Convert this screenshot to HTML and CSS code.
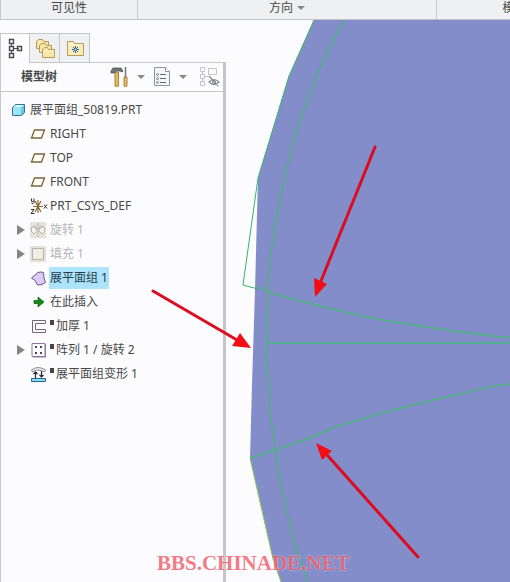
FILE: index.html
```html
<!DOCTYPE html>
<html lang="zh-CN">
<head>
<meta charset="utf-8">
<title>模型树</title>
<link rel="stylesheet" href="styles.css">
</head>
<body>
<header class="ribbon">
  <div class="group group-view">可见性</div>
  <div class="group group-orient"><button class="group-menu" type="button">方向<span class="caret"></span></button></div>
  <div class="group group-model">模型显示</div>
</header>
<main class="workspace">
  <aside class="side">
    <nav class="tabs">
      <button class="tab active" type="button" aria-label="模型树">
        <svg width="18" height="22" viewBox="0 0 18 22" fill="none" stroke="#4a4a4a"><path d="M5.500 5v3M5.500 13v3M8 10.500h5"/><path stroke-width="1.400" d="M3.500 1.500h4v4h-4zM3.500 8.500h4v4h-4zM3.500 15.500h4v4h-4zM11.500 8.500h4v4h-4z"/></svg>
      </button>
      <button class="tab" type="button" aria-label="文件夹浏览器">
        <svg width="22" height="22" viewBox="0 0 22 22" fill="#f8e6a6" stroke="#b59a5c"><path d="M2.500 11.500V4.500l2-2h4l1 2h5v7z"/><path d="M5.500 15.500V8.500l2-2h4l1 2h5v7z"/><path d="M8.500 20.500v-8l2-2h3l1 2h6v8z"/><path stroke="#fff7d6" d="M9.500 14h10"/></svg>
      </button>
      <button class="tab" type="button" aria-label="收藏夹">
        <svg width="20" height="20" viewBox="0 0 20 20"><path d="M2.500 17.500v-14h6l1 2h9v12z" fill="#f9ebba" stroke="#b89c5e"/><path d="M3.500 6.500h14" stroke="#fff9dd"/><path d="M10.500 8v7M7 11.500h7M8 9l5 5M13 9l-5 5" stroke="#235d7e" stroke-width="1"/><circle cx="10.500" cy="11.500" r="1" fill="#e9f4f5"/></svg>
      </button>
    </nav>
    <section class="panel">
      <div class="panel-head">
        <h1 class="title">模型树</h1>
        <div class="tools">
          <button class="tool" type="button" aria-label="设置">
            <svg width="20" height="24" viewBox="0 0 20 24"><path d="M1 6l2-3h8l2 3-1 1-2-1H5v2H1z" fill="#73777b" stroke="#4c5054" stroke-width=".8"/><path d="M5 7h3.500v14q-2 1-3.500 0z" fill="#e8bd5f" stroke="#8c6b27" stroke-width=".8"/><path d="M15.500 2v10" stroke="#74777b" stroke-width="1.500"/><path d="M14 12h3v9q-1.500 1-3 0z" fill="#e8bd5f" stroke="#8c6b27" stroke-width=".8"/></svg>
          </button>
          <span class="caret"></span>
          <button class="tool" type="button" aria-label="显示">
            <svg width="20" height="24" viewBox="0 0 20 24"><path d="M2.500 2.500h11l4 4v14h-15z" fill="#f3f5f6" stroke="#8d969d"/><path d="M13.500 2.500v4h4" fill="#fff" stroke="#8d969d"/><path d="M8 9.500h6M8 13.500h6M8 17.500h6" stroke="#626970"/><g fill="none" stroke="#626970" stroke-width=".8"><circle cx="5.500" cy="9.500" r="1"/><circle cx="5.500" cy="13.500" r="1"/><circle cx="5.500" cy="17.500" r="1"/></g></svg>
          </button>
          <span class="caret"></span>
          <button class="tool" type="button" aria-label="隐藏项">
            <svg width="22" height="24" viewBox="0 0 22 24" fill="none"><path d="M2.500 2.500h4v4h-4zM2.500 9.500h4v4h-4zM2.500 16.500h4v4h-4zM4.500 6.500v3M4.500 13.500v3M6.500 11.500h4M10.500 3.500h8v6h-8z" stroke="#c3c5c8"/><path d="M11 17q5-5 10 0-5 5-10 0zM11 11l9 10" stroke="#888c90" stroke-width="1.200"/><circle cx="16" cy="17" r="1.500" stroke="#888c90"/></svg>
          </button>
        </div>
      </div>
      <ul class="tree">
        <li class="row root">
          <svg class="icon" viewBox="0 0 16 16"><path d="M2.500 5.500l3-3h9v8l-3 3h-9z" fill="#65c9e7" stroke="#35718a"/><path d="M3 6h8v7H3z" fill="#9be5f7"/><path d="M3 5.500l3-2.500h8l-3 2.500z" fill="#d8f8ff"/></svg>
          <span class="label">展平面组_50819.PRT</span>
        </li>
        <li class="row"><svg class="icon" viewBox="0 0 16 16"><path d="M4.500 4h10l-3 8h-10z" fill="#fffef6" stroke="#75633b" stroke-width="1.300"/></svg><span class="label">RIGHT</span></li>
        <li class="row"><svg class="icon" viewBox="0 0 16 16"><path d="M4.500 4h10l-3 8h-10z" fill="#fffef6" stroke="#75633b" stroke-width="1.300"/></svg><span class="label">TOP</span></li>
        <li class="row"><svg class="icon" viewBox="0 0 16 16"><path d="M4.500 4h10l-3 8h-10z" fill="#fffef6" stroke="#75633b" stroke-width="1.300"/></svg><span class="label">FRONT</span></li>
        <li class="row">
          <svg class="icon wide" viewBox="0 0 18 16" fill="none"><path d="M8 2v13M3 8.500h10M5 3l6 11M11 3L5 14" stroke="#8a6a35" stroke-width="1.200"/><path d="M1.500 .500v3h2M4 .500v4l-1 1H1.500M1 11.500h3l-3 4h3.500M14 6.500l3 4M17 6.500l-3 4" stroke="#333"/></svg>
          <span class="label">PRT_CSYS_DEF</span>
        </li>
        <li class="row muted">
          <button class="toggle" type="button" aria-label="展开 旋转 1"></button>
          <svg class="icon" viewBox="0 0 16 16" fill="none"><path fill="#e4e4dc" d="M0 0h16v16H0z"/><path d="M8 1v14" stroke="#aaa" stroke-dasharray="3 1"/><path d="M2 5l4-1 1 5-3 3-3-3zM14 5l-4-1-1 5 3 3 3-3zM3 4l3 3M13 4l-3 3" stroke="#b5b5a8" fill="#f4f4ee"/></svg>
          <span class="label">旋转 1</span>
        </li>
        <li class="row muted">
          <button class="toggle" type="button" aria-label="展开 填充 1"></button>
          <svg class="icon" viewBox="0 0 16 16"><path fill="#e2e2d9" d="M0 0h16v16H0z"/><path d="M2.500 2.500h11v11h-11z" fill="#eeeee6" stroke="#b5b5a6"/></svg>
          <span class="label">填充 1</span>
        </li>
        <li class="row">
          <svg class="icon" viewBox="0 0 16 16"><path d="M1.500 8L8 2.500q3-1 5.500 0 0 6 2 10-3 2.500-8 2.500Q6 10 1.500 8z" fill="#d9caf6" stroke="#67588a"/></svg>
          <span class="label selected">展平面组 1</span>
        </li>
        <li class="row">
          <svg class="icon" viewBox="0 0 16 16"><path d="M4 6.500h4V3l6 5-6 5V9.500H4z" fill="#118a18" stroke="#09560d" stroke-width=".7"/></svg>
          <span class="label">在此插入</span>
        </li>
        <li class="row">
          <svg class="icon" viewBox="0 0 16 16" fill="none"><path d="M15.500 2.500h-13v12h13v-3h-10v-6h10z" fill="#faf8ff" stroke="#6e6878"/></svg>
          <span class="mark"></span><span class="label">加厚 1</span>
        </li>
        <li class="row">
          <button class="toggle" type="button" aria-label="展开 阵列 1"></button>
          <svg class="icon" viewBox="0 0 16 16"><path d="M2 1.500h13v13H2z" fill="#fff" stroke="#89789e"/><path d="M15.500 2v13H3" fill="none" stroke="#8d799e"/><path d="M5 4h2v2H5zM10 4h2v2h-2zM5 10h2v2H5zM10 10h2v2h-2z" fill="#4f425b"/></svg>
          <span class="mark"></span><span class="label">阵列 1 / 旋转 2</span>
        </li>
        <li class="row">
          <svg class="icon" viewBox="0 0 16 16"><path d="M1.500 4Q8-1 15.500 4l-1 2Q8 2 2.500 6z" fill="#eee" stroke="#8a8a8a"/><path d="M5.500 12V6M3.500 8l2-2 2 2M11.500 5v6M9.500 9l2 2 2-2" fill="none" stroke="#222" stroke-width="1.200"/><path d="M1.500 12.500h14v3h-14z" fill="#8bd9fa" stroke="#266789"/></svg>
          <span class="mark"></span><span class="label">展平面组变形 1</span>
        </li>
      </ul>
    </section>
  </aside>
  <svg class="view" role="img" aria-label="展平曲面">
    <g transform="translate(-226 -20)" fill="none">
      <path d="M314 20L289 76 258 178 257 215 255 290 252 385 250 458 273 559 281 582H3000V20z" fill="#828dca"/>
      <g stroke="#4bb57d" stroke-width="1.400">
        <path d="M344 20Q323 58 312 88 294 132 281 194 270 250 268 284L267 360Q268 402 275 448 282 498 297 551L308 582"/>
        <path d="M258 286L268 292Q345 314 400 323T510 338"/>
        <path d="M250 458L275 450Q310 439 335 427 410 404 465 393 488 386 510 384"/>
      </g>
      <path d="M267 343H3000" stroke="#55ad92" stroke-width="2"/>
      <path d="M314 20L289 76 258 178 243 285 258 289" stroke="#35b565"/>
      <path d="M250 458L273 559 281 582" stroke="#8bc65a"/>
      <g stroke="#dc0d20" stroke-width="3" stroke-linecap="round"><path d="M375 147L321 281M153 291L237 340M418 557L328 456"/></g>
      <path d="M315 297L314 278 327 284zM251 348L240 333 232 346zM316 443L332 451 322 460z" fill="#f30d16"/>
    </g>
  </svg>
  <p class="watermark">BBS.CHINADE.NET</p>
</main>
</body>
</html>
```
FILE: styles.css
```css
* {
  box-sizing: border-box;
}

body {
  margin: 0;
  min-height: 100vh;
  display: flex;
  flex-direction: column;
  background: #fcfcfe;
  color: #484848;
  font: 12px/16px "Noto Sans", "Noto Sans CJK SC", sans-serif;
}

button {
  padding: 0;
  border: 0;
  background: none;
  color: inherit;
  font: inherit;
}

.ribbon {
  display: flex;
  height: 20px;
  overflow: hidden;
  background: #eff0f2;
  border-bottom: 1px solid #c2c3c5;
}

.group {
  display: flex;
  justify-content: center;
  flex: none;
  white-space: nowrap;
  border-right: 1px solid #c8c9cc;
}

.group-view {
  width: 138px;
  border-left: 1px solid #c8c9cc;
}

.group-orient {
  width: 299px;
}

.group-model {
  flex: 1 0 180px;
}

.group-menu {
  display: flex;
  align-items: center;
  gap: 4px;
  height: 16px;
}

.caret {
  border: 4px solid transparent;
  border-top-color: #85878a;
  border-bottom-width: 0;
}

.workspace {
  position: relative;
  flex: 1;
  display: flex;
  overflow: hidden;
}

.side {
  flex: none;
  width: 226px;
  display: flex;
  flex-direction: column;
  padding-top: 13px;
}

.tabs {
  display: flex;
}

.tab {
  display: flex;
  align-items: center;
  justify-content: center;
  width: 30px;
  height: 29px;
  background: #eff0f2;
  border: 1px solid #c6c7ca;
  border-left: 0;
  border-bottom: 0;
}

.tab.active {
  height: 30px;
  margin-bottom: -1px;
  background: #fcfcfe;
  border-left: 1px solid #c6c7ca;
  z-index: 1;
}

.panel {
  flex: 1;
  border: 1px solid #c6c7ca;
  border-right: 3px solid #c5c5c7;
  border-bottom: 0;
}

.panel-head {
  display: flex;
  align-items: center;
  justify-content: space-between;
  height: 29px;
  padding-left: 20px;
  border-bottom: 1px solid #c6c7ca;
}

.title {
  margin: 0;
  font-size: 12px;
  line-height: 16px;
  font-weight: 700;
}

.tools {
  display: flex;
  align-items: center;
  gap: 7px;
  padding-right: 3px;
}

.tool {
  display: flex;
}

.tool:last-child {
  margin-left: 4px;
}

.tree {
  list-style: none;
  margin: 0;
  padding: 6px 0 0;
}

.row {
  display: grid;
  grid-template-columns: 13px 16px auto auto 1fr;
  align-items: center;
  height: 24px;
  padding-left: 16px;
}

.root {
  grid-template-columns: 16px auto;
  padding-left: 9px;
}

.root .icon {
  grid-column: 1;
}

.toggle {
  width: 8px;
  height: 10px;
  background: #858585;
  clip-path: polygon(0 0, 100% 50%, 0 100%);
}

.icon {
  grid-column: 2;
  width: 16px;
  height: 16px;
}

.icon.wide {
  width: 18px;
}

.label {
  margin-left: 3px;
  padding: 3px 1px;
  white-space: nowrap;
}

.muted .label {
  color: #b4b4b4;
}

.selected {
  background: #ade3fb;
  color: #243d4b;
}

.mark {
  width: 4px;
  height: 5px;
  margin: 0 0 8px 4px;
  background: #444;
}

.mark + .label {
  margin-left: 1px;
}

.view {
  flex: 1;
  min-width: 0;
  overflow: visible;
}

.watermark {
  position: absolute;
  left: 157px;
  bottom: 7px;
  margin: 0;
  color: rgba(235, 45, 60, 0.65);
  font: 700 21px/24px "Liberation Serif", serif;
  text-shadow: 0 0 2px rgba(255, 255, 255, 0.7);
}
```
